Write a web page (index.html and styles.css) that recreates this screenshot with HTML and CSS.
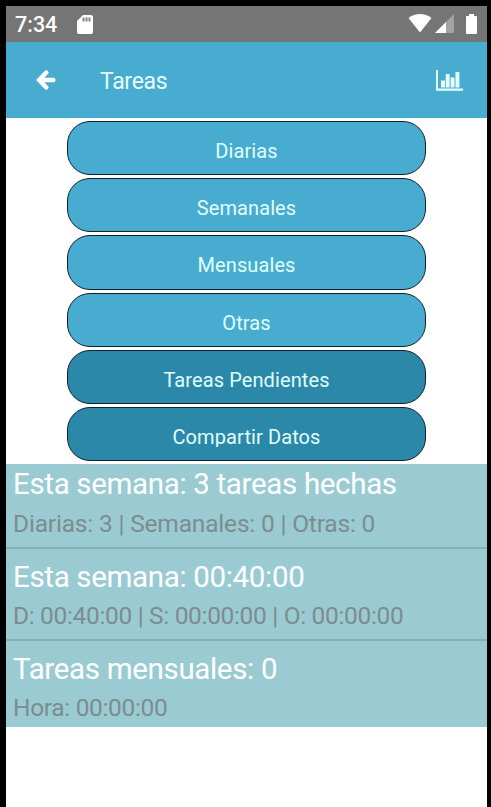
FILE: index.html
```html
<!DOCTYPE html>
<html lang="es">
<head>
    <meta charset="UTF-8">
    <meta name="viewport" content="width=device-width, initial-scale=1.0">
    <title>Tareas</title>
    <link rel="stylesheet" href="styles.css">
</head>
<body>
    <div class="screen">
        <div class="status-bar">
            <span class="clock">7:34</span>
            <svg class="sd-icon" width="16" height="20" viewBox="0 0 16 20">
                <path fill="#fff" d="M6 0h8a2 2 0 0 1 2 2v15a2 2 0 0 1-2 2H2a2 2 0 0 1-2-2V6z"/>
                <path fill="#858585" d="M5.5 2.5h2v4h-2zM8.5 2.5h2v4h-2zM11.5 2.5h2v4h-2z"/>
            </svg>
            <div class="status-icons">
                <svg width="24" height="19" viewBox="0 0 24 19">
                    <path fill="#fff" d="M0.5 4C7-1.2 17-1.2 23.5 4L12 18.5z"/>
                </svg>
                <svg width="19" height="19" viewBox="0 0 19 19">
                    <path fill="#a3a3a3" d="M19 0v19H0z"/>
                    <path fill="#fff" d="M11 8v11H0z"/>
                </svg>
                <svg width="11" height="20" viewBox="0 0 11 20">
                    <path fill="#fff" d="M3 0h5v2h2a1 1 0 0 1 1 1v16a1 1 0 0 1-1 1H1a1 1 0 0 1-1-1V3a1 1 0 0 1 1-1h2z"/>
                </svg>
            </div>
        </div>

        <header class="app-bar">
            <svg class="back-icon" width="20" height="20" viewBox="0 0 20 20">
                <path fill="none" stroke="#fff" stroke-width="4.4" stroke-linecap="round" stroke-linejoin="miter" d="M10.3 2.6L3.2 10l7.1 7.4M4.5 10H17.3"/>
            </svg>
            <h1 class="app-title">Tareas</h1>
            <svg class="chart-icon" width="27" height="21" viewBox="0 0 27 21">
                <path fill="#e6ffff" d="M0 0h2v18.6h25v2.1H0zM5 10.5h3.9v6.9H5zM9.7 4h3.9v13.4H9.7zM14.6 7.5h3.9v9.9h-3.9zM19.5 2h3.9v15.4h-3.9z"/>
            </svg>
        </header>

        <nav class="menu">
            <button class="menu-button"><span>Diarias</span></button>
            <button class="menu-button"><span>Semanales</span></button>
            <button class="menu-button"><span>Mensuales</span></button>
            <button class="menu-button"><span>Otras</span></button>
            <button class="menu-button dark"><span>Tareas Pendientes</span></button>
            <button class="menu-button dark"><span class="clipped">Compartir Datos</span></button>
        </nav>

        <ul class="summary">
            <li class="summary-item">
                <div class="summary-title">Esta semana: 3 tareas hechas</div>
                <div class="summary-detail">Diarias: 3 | Semanales: 0 | Otras: 0</div>
            </li>
            <li class="summary-item">
                <div class="summary-title">Esta semana: 00:40:00</div>
                <div class="summary-detail narrow">D: 00:40:00 | S: 00:00:00 | O: 00:00:00</div>
            </li>
            <li class="summary-item">
                <div class="summary-title">Tareas mensuales: 0</div>
                <div class="summary-detail narrow">Hora: 00:00:00</div>
            </li>
        </ul>
    </div>
</body>
</html>
```
FILE: styles.css
```css
* {
    margin: 0;
    padding: 0;
    box-sizing: border-box;
}

body {
    font-family: Roboto, sans-serif;
    background-color: #000;
    height: 100vh;
    padding: 6px 4px 0 6px;
    overflow: hidden;
}

.screen {
    height: 100%;
    background-color: #fff;
}

.status-bar {
    display: flex;
    align-items: center;
    height: 36px;
    padding: 0 10px 0 9px;
    background-color: #757575;
    color: #fff;
}

.clock {
    width: 62px;
    padding-top: 2px;
    font-size: 21.5px;
    font-weight: 500;
    line-height: 36px;
}

.sd-icon {
    margin-top: 2px;
}

.status-icons {
    display: flex;
    align-items: center;
    margin-left: auto;
    padding-bottom: 1px;
    gap: 3px;
}

.status-icons svg:last-child {
    margin-left: 9px;
}

.app-bar {
    display: flex;
    align-items: center;
    height: 76px;
    padding: 0 24px 0 30px;
    background-color: #47accf;
}

.app-title {
    margin-left: 44px;
    padding-top: 3px;
    color: #e6ffff;
    font-size: 23px;
    font-weight: 400;
    letter-spacing: -0.3px;
}

.chart-icon {
    margin-left: auto;
}

.menu {
    display: flex;
    flex-direction: column;
    align-items: center;
    gap: 3px;
    height: 346px;
    padding-top: 3px;
}

.menu-button {
    width: 359px;
    height: 54.2px;
    padding-top: 6px;
    background-color: #47accf;
    border: 1.5px solid #10202c;
    border-radius: 23px;
    color: #e0ffff;
    font-family: inherit;
    font-size: 20px;
    letter-spacing: 0.1px;
}

.menu-button span {
    display: block;
    height: 20px;
    line-height: 21px;
}

/* cuts off the end of the descender */
.menu-button .clipped {
    overflow: hidden;
}

.menu-button.dark {
    background-color: #2b88a9;
}

.summary {
    height: 263px;
    background-color: #9bcbd2;
    list-style: none;
}

.summary-item {
    height: 92px;
    padding: 8px 7px 0;
    border-bottom: 2px solid #81b2ba;
}

.summary-item:first-child {
    height: 85px;
    padding-top: 0;
}

.summary-item:last-child {
    height: 86px;
    border-bottom: none;
}

.summary-title {
    color: #fff;
    font-size: 29.5px;
    line-height: 40px;
    letter-spacing: -0.33px;
    white-space: nowrap;
}

.summary-detail {
    color: #7c8c90;
    font-size: 24.5px;
    line-height: 39px;
    letter-spacing: -0.18px;
    white-space: nowrap;
}

.summary-detail.narrow {
    line-height: 37px;
    letter-spacing: -0.33px;
}
```
